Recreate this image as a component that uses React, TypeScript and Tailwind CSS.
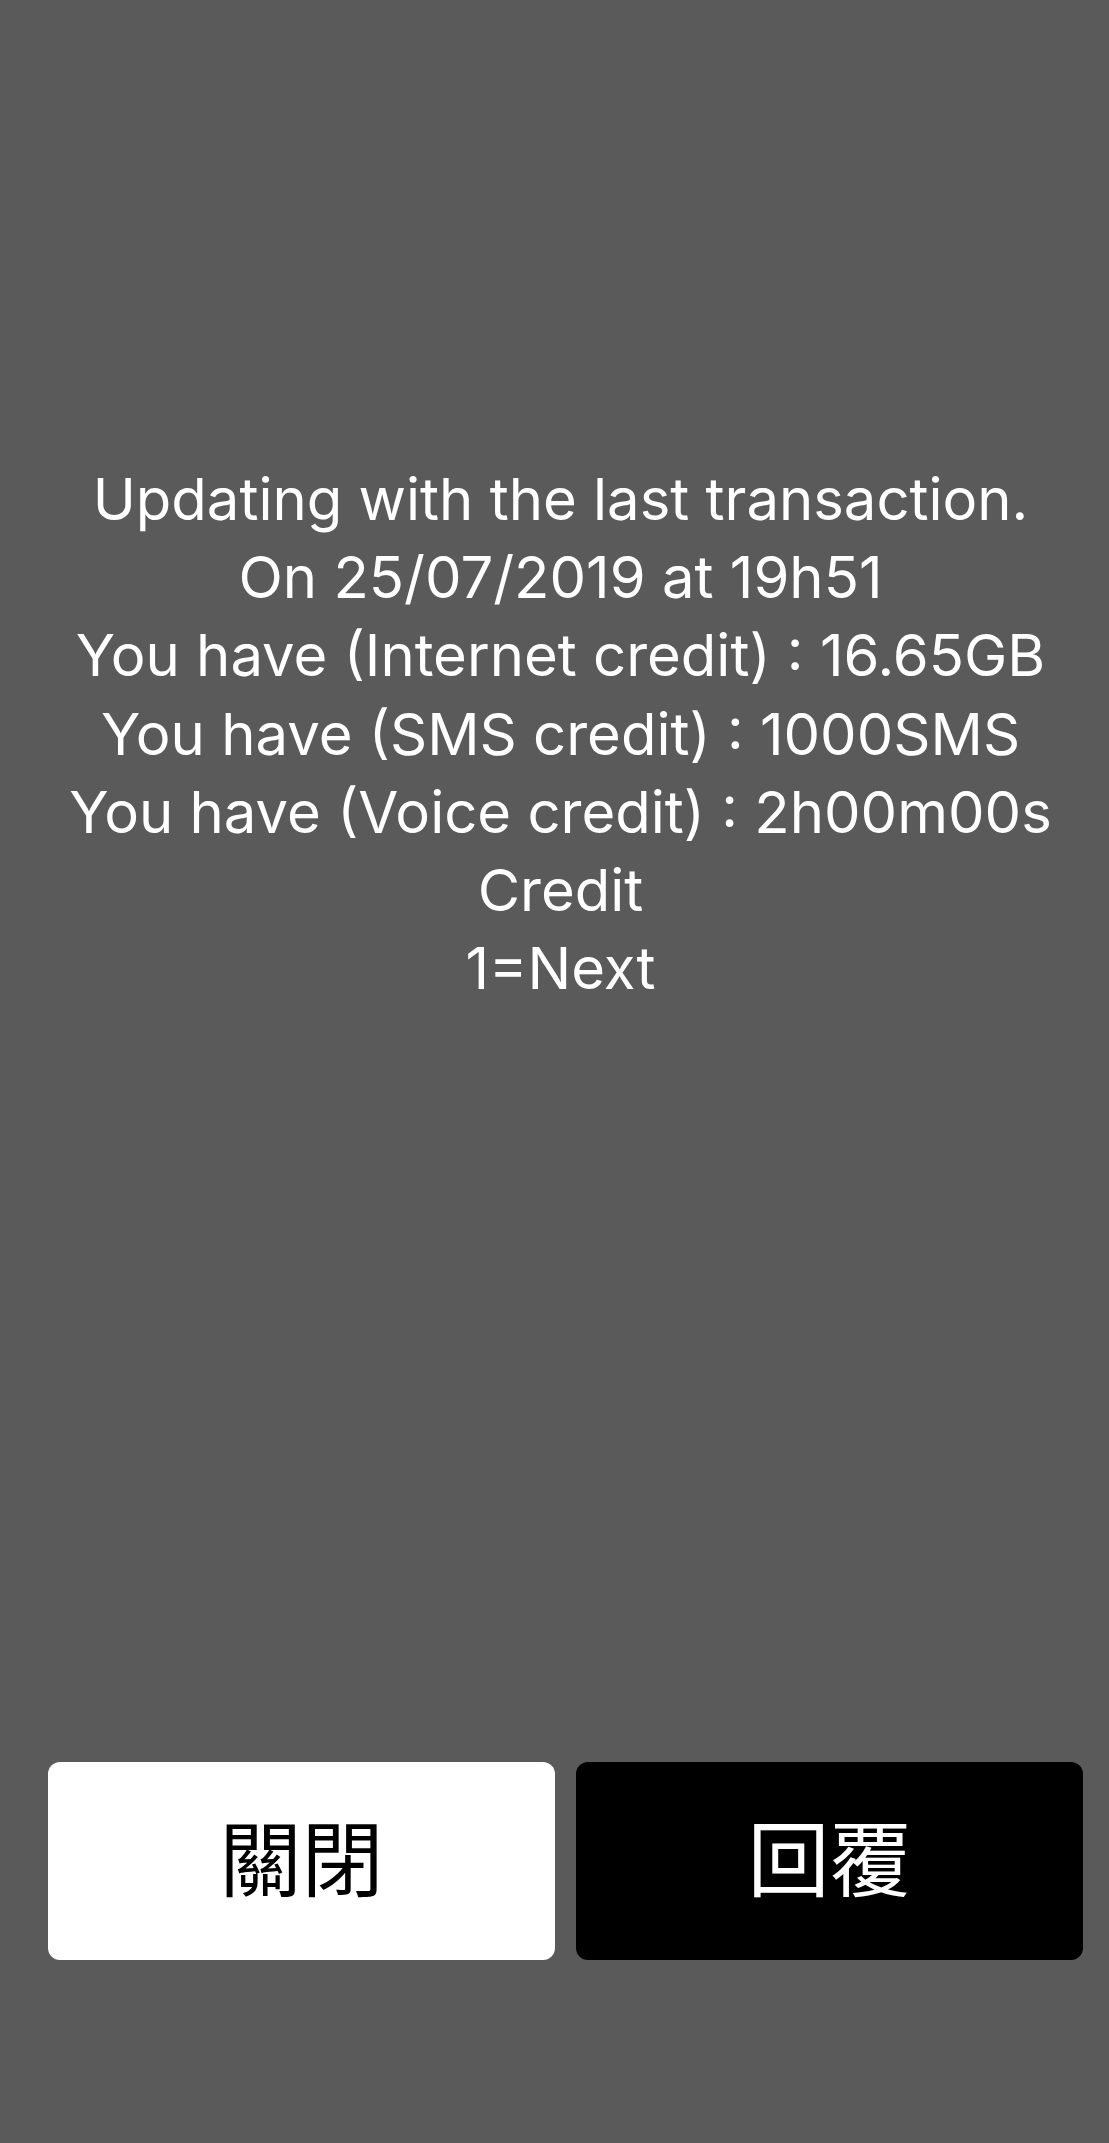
import React from "react";

const lines = [
  "Updating with the last transaction.",
  "On 25/07/2019 at 19h51",
  "You have (Internet credit) : 16.65GB",
  "You have (SMS credit) : 1000SMS",
  "You have (Voice credit) : 2h00m00s",
  "Credit",
  "1=Next",
];

export default function App() {
  return (
    <div
      className="w-[1109px] h-[2143px] bg-[#5a5a5a] flex flex-col"
      style={{ fontFamily: 'Inter, "Noto Sans CJK TC", sans-serif' }}
    >
      <div className="pt-[460px] pl-[12px] flex flex-col items-center text-white text-[58px] leading-[78.2px]">
        {lines.map((l) => (
          <div key={l} className="whitespace-nowrap">{l}</div>
        ))}
      </div>
      <div className="mt-auto mb-[183px] pl-[48px] pr-[26px] flex gap-[21px]">
        <button className="flex-1 h-[198px] pb-[14px] rounded-[12px] bg-white text-black text-[82px] flex items-center justify-center" style={{ fontFamily: '"Noto Sans CJK TC", sans-serif' }}>
          關閉
        </button>
        <button className="flex-1 h-[198px] pb-[14px] rounded-[12px] bg-black text-white text-[82px] flex items-center justify-center" style={{ fontFamily: '"Noto Sans CJK TC", sans-serif' }}>
          回覆
        </button>
      </div>
    </div>
  );
}
